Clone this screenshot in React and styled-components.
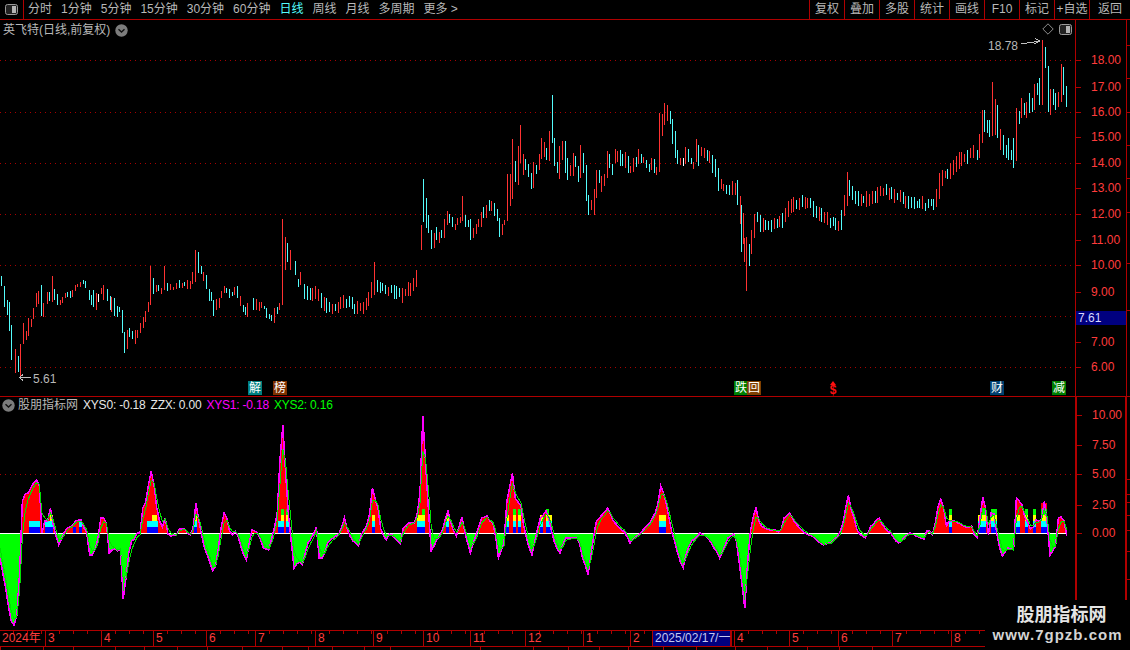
import React from "react"
import styled, { createGlobalStyle } from "styled-components"

const RED_LINE = "#b00000"
const TEXT_RED = "#ff3c3c"
const GRAY = "#b8b8b8"
const STEP = 2.8

const GlobalStyle = createGlobalStyle`
  html, body {
    margin: 0;
    padding: 0;
    background: #000;
  }
  body {
    font-family: "Liberation Sans", "Noto Sans CJK SC", sans-serif;
    font-size: 12px;
  }
`

const Page = styled.div`
  position: relative;
  display: flex;
  flex-direction: column;
  width: 1130px;
  height: 650px;
  overflow: hidden;
  background: #000;
  color: ${GRAY};
`

const Toolbar = styled.header`
  display: flex;
  align-items: stretch;
  height: 20px;
  box-sizing: border-box;
  border-bottom: 1px solid ${RED_LINE};
  line-height: 19px;
`

const ToggleCell = styled.div`
  display: flex;
  align-items: center;
  justify-content: center;
  width: 24px;
  box-sizing: border-box;
  border-right: 1px solid ${RED_LINE};
`

const Tabs = styled.nav`
  display: flex;
  flex: 1;
  gap: 9px;
  padding-left: 4px;
`

const Tab = styled.span`
  color: ${p => (p.$active ? "#54fcfc" : GRAY)};
  white-space: nowrap;
`

const ActionGroup = styled.nav`
  display: grid;
  grid-template-columns: repeat(8, 35px) 41px;
`

const Action = styled.span`
  border-left: 1px solid ${RED_LINE};
  text-align: center;
  white-space: nowrap;
`

const PricePane = styled.section`
  display: flex;
  height: 377px;
  box-sizing: border-box;
  border-bottom: 1px solid ${RED_LINE};
`

const IndicatorPane = styled.section`
  display: flex;
  height: 233px;
`

const Plot = styled.div`
  position: relative;
  width: 1075px;
  flex: none;
`

const ChartSvg = styled.svg`
  display: block;
  width: 100%;
  height: 100%;
  shape-rendering: crispEdges;
`

const DotLine = styled.line`
  stroke: #a80000;
  stroke-dasharray: 1 4;
  shape-rendering: auto;
`

const Axis = styled.div`
  position: relative;
  flex: 1;
  border-left: ${p => p.$width}px solid ${RED_LINE};
`

const AxisRail = styled.svg`
  position: absolute;
  inset: 0;
  width: 100%;
  height: 100%;
  shape-rendering: crispEdges;
`

const AxisLabel = styled.span.attrs(p => ({ style: { top: p.$y - 7 } }))`
  position: absolute;
  left: 15px;
  line-height: 14px;
  color: ${TEXT_RED};
`

const PriceTag = styled.span`
  position: absolute;
  left: 0;
  top: 291px;
  width: 50px;
  height: 14px;
  padding-left: 2px;
  box-sizing: border-box;
  background: #00007f;
  color: #d8d8ff;
  line-height: 14px;
`

const PaneTitle = styled.div`
  position: absolute;
  left: 3px;
  top: 3px;
  display: flex;
  align-items: center;
  gap: 5px;
  line-height: 14px;
  white-space: nowrap;
`

const IndicatorTitle = styled(PaneTitle)`
  left: 2px;
  top: 1px;
  gap: 3px;
`

const Legend = styled.span`
  margin-left: 2px;
  color: ${p => p.$color};
  letter-spacing: -0.2px;
  white-space: nowrap;
`

const CornerTools = styled.div`
  position: absolute;
  right: 3px;
  top: 3px;
  display: flex;
  align-items: center;
  gap: 5px;
`

const PriceNote = styled.span`
  position: absolute;
  color: ${GRAY};
  line-height: 14px;
  ${p => `left: ${p.$x}px; top: ${p.$y}px;`}
`

const Marker = styled.span.attrs(p => ({ style: { left: p.$x } }))`
  position: absolute;
  top: 361px;
  width: 14px;
  height: 14px;
  background: ${p => p.$bg};
  color: #fff;
  font-size: 12px;
  line-height: 14px;
  text-align: center;
`

const DollarMark = styled.span`
  position: absolute;
  left: 827px;
  top: 364px;
  width: 12px;
  color: #ff1010;
  font-size: 12px;
  font-weight: bold;
  line-height: 12px;
  text-align: center;
  &::before {
    content: "";
    position: absolute;
    left: 3px;
    top: -3px;
    border: 3px solid transparent;
    border-top: 0;
    border-bottom: 4px solid #ff1010;
  }
`

const DateRow = styled.footer`
  display: flex;
  height: 17px;
  box-sizing: border-box;
  border-top: 1px solid ${RED_LINE};
  border-bottom: 1px solid ${RED_LINE};
`

const DateCell = styled.span.attrs(p => ({ style: { width: p.$w } }))`
  flex: none;
  box-sizing: border-box;
  padding-left: 2px;
  border-left: ${p => (p.$first ? 0 : 1)}px solid ${RED_LINE};
  background: linear-gradient(to right, ${RED_LINE} 1px, transparent 1px) 13px 0 / 14px 3px repeat-x;
  color: ${TEXT_RED};
  line-height: 15px;
  white-space: nowrap;
`

const DateCursor = styled.span`
  flex: none;
  width: 79px;
  box-sizing: border-box;
  padding-left: 2px;
  border: 1px solid ${RED_LINE};
  border-width: 0 1px;
  background: #00007f;
  color: #c4c8f0;
  line-height: 15px;
  white-space: nowrap;
`

const StatusRow = styled.div`
  display: flex;
  flex: 1;
`

const StatusCell = styled.span.attrs(p => ({ style: { width: p.$w } }))`
  flex: none;
  box-sizing: border-box;
  border-left: 1px solid ${RED_LINE};
`

const Watermark = styled.aside`
  position: absolute;
  right: 0;
  bottom: 0;
  display: flex;
  flex-direction: column;
  align-items: center;
  width: 145px;
  height: 50px;
  padding: 4px 0 0 4px;
  box-sizing: border-box;
  background: #000;
  color: #e4e4e4;
  font-weight: bold;
`

const WatermarkName = styled.span`
  margin-left: 4px;
  font-size: 18px;
  line-height: 22px;
`

const WatermarkUrl = styled.span`
  margin-left: -4px;
  color: #d4d4d4;
  font-size: 15px;
  line-height: 18px;
  letter-spacing: 1px;
`

const PanelToggle = () => (
  <svg width="13" height="11" viewBox="0 0 13 11">
    <rect x="0.5" y="0.5" width="12" height="10" rx="2" fill="#222" stroke="#9a9a9a" />
    <rect x="7" y="2" width="4" height="7" fill="#b4b4b4" />
  </svg>
)

const DownBadge = () => (
  <svg width="13" height="13" viewBox="0 0 13 13">
    <circle cx="6.5" cy="6.5" r="6.2" fill="#7c7c7c" />
    <path d="M3.5 5.2 L6.5 8 L9.5 5.2" fill="none" stroke="#111" strokeWidth="1.4" />
  </svg>
)

const Diamond = () => (
  <svg width="12" height="12" viewBox="0 0 12 12">
    <path d="M6 .8 L11.2 6 L6 11.2 L.8 6 Z" fill="none" stroke="#8c8c8c" />
  </svg>
)

// "x,top,bottom,colour" read off the chart, scaled by 3 from the crop it came from
const parseBars = (text, ox, oy, shift = () => 0) =>
  text
    .trim()
    .split(/\s+/)
    .map(t => {
      const [x, a, b, c] = t.split(",")
      const px = ox + x / 3
      return { x: Math.round(px + shift(px)), top: oy + a / 3, bottom: oy + b / 3, c }
    })

const leftBars = parseBars(
  `4,48,78,c 13,78,141,c 20,120,165,c 28,126,213,c 34,195,300,c 44,267,339,r 53,288,335,c 59,252,348,r 68,189,252,r
  77,213,240,r 83,174,228,r 92,177,201,r 98,144,178,r 107,98,141,r 115,93,132,r 122,75,168,c 130,129,171,r 140,95,132,r
  146,96,123,c 155,48,126,r 161,87,120,c 170,102,135,c 179,120,135,r 185,111,129,r 194,99,114,r 202,96,111,c 209,93,114,c
  217,90,111,r 224,75,93,r 232,72,81,r 240,66,81,r 248,60,72,c 256,63,84,c 266,90,120,c 272,105,135,c 280,90,141,c
  287,100,150,r 295,102,126,w 304,84,102,r 310,75,120,r 320,87,123,c 329,108,150,c 334,111,156,r 343,114,168,c 350,138,171,c
  358,141,156,c 367,150,219,c 373,216,279,c 382,210,267,r 388,204,231,c 397,213,237,c 406,210,252,r 412,210,234,r 421,189,219,r
  430,170,204,r 436,153,186,r 445,126,156,r 451,18,135,r 460,54,102,c 469,75,96,r 475,75,93,c 484,84,102,r 493,18,90,r
  502,69,93,c 511,72,90,r 520,81,90,r 529,69,87,r 538,60,84,c 547,69,84,r 553,66,78,c 562,60,87,r 571,63,87,r 577,36,72,r
  586,-30,66,r 595,-25,39,c 604,18,42,c 610,36,63,r 619,45,87,c 628,87,123,c 634,96,123,c 640,120,168,c 649,117,150,r
  658,114,144,r 664,93,114,r 673,78,99,r 679,84,99,c 688,87,114,c 697,96,108,c 703,81,105,r 712,78,114,c 721,108,138,r
  730,135,156,c 736,141,165,c 742,129,171,r 751,114,150,c 760,117,150,r 769,126,153,r 775,126,144,r 784,138,147,c 790,144,174,c
  799,162,177,c 805,165,183,c 814,144,189,r 823,141,162,c 829,129,150,r 838,-124,135,r 847,-70,30,r 853,-50,6,c 862,-30,30,r
  877,3,45,c 886,57,81,c 892,36,75,r`,
  0,
  260,
  px => (px >= 250 ? 3 : 0)
)

const middleBars = parseBars(
  `64,405,480,r 70,267,395,c 79,325,415,c 85,375,430,c 94,420,476,c 103,430,475,r 109,412,450,c 118,427,458,r 124,420,443,c
  133,388,443,r 142,363,405,r 148,372,400,c 157,381,411,c 166,402,420,r 172,385,405,r 181,380,400,r 187,318,392,r 196,375,410,c
  205,390,410,c 211,387,450,c 220,415,445,r 229,402,432,r 235,388,410,r 244,366,410,r 250,351,385,c 259,345,385,r 268,330,363,c
  274,333,363,r 283,339,378,c 292,357,393,c 298,384,440,c 307,402,435,r 313,390,405,r 322,252,393,r 331,252,348,r 337,148,327,r
  346,213,276,c 355,168,285,r 361,105,220,r 370,192,255,r 376,207,240,c 385,222,262,c 394,249,297,c 400,217,295,r 409,225,252,c
  418,192,240,r 424,144,207,r 433,155,200,r 439,174,210,c 448,123,213,r 457,15,160,c 463,144,228,c 472,216,249,c 478,168,267,r
  487,153,210,r 496,153,249,c 502,204,270,c 511,225,258,r 520,189,258,r 526,198,231,c 535,228,276,c 541,165,264,r 550,189,249,c
  559,225,333,c 565,315,375,c 574,330,360,r 583,297,375,r 589,240,324,r 598,240,279,c 604,258,306,r 613,252,288,r 622,183,264,r
  628,192,234,c 637,222,255,c 646,177,219,r 652,183,216,r 661,180,228,c 667,192,228,c 676,186,234,r 685,198,249,c 691,228,249,r
  700,204,246,r 709,201,231,c 715,177,222,r 724,192,219,c 730,201,219,r 739,210,234,c 748,222,246,c 754,204,240,r 763,207,249,c
  769,231,255,r 778,69,246,r 787,72,138,r 793,39,105,r 802,45,93,r 811,63,102,c 817,87,162,c 826,123,204,c 832,180,222,c
  841,204,225,r 850,204,228,w 856,171,222,r 865,177,216,c 874,204,222,c 880,216,237,r 889,147,216,r 895,165,228,c`,
  400,
  90
)

const rightBars = parseBars(
  `110,360,390,c 118,312,385,r 127,240,340,r 133,240,305,c 141,270,310,c 148,270,320,c 157,157,318,r 165,208,315,r 172,225,325,c
  181,298,360,r 190,315,375,c 198,345,385,c 205,325,390,c 212,360,390,c 220,325,415,c 229,235,392,r 236,243,282,c 244,205,265,r
  252,220,255,c 259,215,265,r 267,190,248,c 275,205,245,c 283,162,240,r 291,160,195,c 298,145,225,c 307,30,225,r 316,52,115,c
  323,108,245,c 330,178,255,r 338,178,225,c 346,190,240,c 354,185,232,r 362,102,215,r 370,112,195,c 379,168,230,c`,
  940,
  30
)

const spikes = [
  { x: 374, top: 262, bottom: 294, c: "r" },
  { x: 741, top: 205, bottom: 252, c: "c" },
  { x: 746, top: 245, bottom: 291, c: "r" },
  { x: 744, top: 238, bottom: 262, c: "r" },
  { x: 847, top: 172, bottom: 205, c: "r" },
]

// price path in page pixels, for the stretches filled in by the generator
const pricePath = [
  [298, 285], [305, 295], [315, 292], [322, 305], [335, 308], [345, 300], [355, 310], [365, 305], [372, 285], [378, 288],
  [390, 290], [400, 295], [410, 288], [418, 270], [422, 250],
  [698, 150], [705, 155], [712, 165], [718, 185], [725, 190], [735, 187], [741, 225], [746, 262], [750, 240], [755, 215],
  [760, 225], [770, 225], [780, 220], [788, 205], [800, 202], [810, 205], [818, 215], [828, 222], [838, 225], [843, 205],
  [847, 185], [852, 195], [862, 200], [872, 198], [882, 190], [892, 195], [902, 200], [912, 203], [925, 205], [935, 200],
  [940, 175], [950, 170], [960, 158], [970, 155], [978, 145],
]

const mulberry = seed => () => {
  seed = (seed + 0x6d2b79f5) | 0
  let t = Math.imul(seed ^ (seed >>> 15), 1 | seed)
  t = (t + Math.imul(t ^ (t >>> 7), 61 | t)) ^ t
  return ((t ^ (t >>> 14)) >>> 0) / 4294967296
}

const interp = (pts, x) => {
  if (x <= pts[0][0]) return pts[0][1]
  for (let i = 1; i < pts.length; i++) {
    if (x <= pts[i][0]) {
      const [x0, y0] = pts[i - 1]
      const [x1, y1] = pts[i]
      return y0 + ((y1 - y0) * (x - x0)) / (x1 - x0)
    }
  }
  return pts[pts.length - 1][1]
}

const generateBars = (from, to, seed) => {
  const rand = mulberry(seed)
  const out = []
  for (let x = from; x <= to; x += STEP) {
    const now = interp(pricePath, x)
    const prev = interp(pricePath, x - STEP)
    let c = now < prev ? "r" : "c"
    if (rand() < 0.3) c = c === "r" ? "c" : "r"
    out.push({
      x: Math.round(x),
      top: Math.min(now, prev) - 2 - rand() * 6,
      bottom: Math.max(now, prev) + 2 + rand() * 6,
      c,
    })
  }
  return out
}

const candles = [
  ...leftBars,
  ...generateBars(304, 418, 11),
  ...middleBars,
  ...generateBars(701, 975, 29),
  ...spikes,
  ...rightBars,
]

const barsPath = c =>
  candles
    .filter(b => b.c === c)
    .map(b => `M${b.x + 0.5} ${Math.round(b.top)}V${Math.round(b.bottom)}`)
    .join("")

const priceGrid = [60, 112, 163, 214, 265, 316, 367]
const priceLabels = [
  ["18.00", 60], ["17.00", 87], ["16.00", 112], ["15.00", 137], ["14.00", 163], ["13.00", 188], ["12.00", 214],
  ["11.00", 240], ["10.00", 265], ["9.00", 292], ["7.00", 342], ["6.00", 367],
]
const indicatorLabels = [
  ["10.00", 415], ["7.50", 445], ["5.00", 474], ["2.50", 505], ["0.00", 533],
]

const oscillator = [
  [0, -20], [1, -25], [3, -40], [6, -55], [10, -85], [13, -92], [15, -88], [17, -83], [19, -40], [20, -20], [21, 0],
  [22, 30], [24, 38], [28, 40], [31, 45], [35, 53], [38, 48], [40, 25], [42, 0], [44, -3], [45, 12], [47, 10], [51, 25],
  [53, 8], [55, 0], [58, -8], [60, -12], [62, -5], [64, 0], [67, 5], [72, 7], [75, 12], [80, 13], [84, 5], [87, 0],
  [90, -22], [93, -22], [96, -14], [99, 0], [101, 15], [104, 15], [106, 10], [108, 0], [110, -20], [113, -15], [118, -18],
  [122, -14], [124, -66], [127, -35], [130, -10], [135, -5], [137, 0], [140, 0], [143, 25], [147, 35], [150, 62], [153, 48],
  [156, 25], [160, 10], [163, 5], [165, 15], [167, 0], [170, -3], [175, -2], [178, 4], [184, 4], [187, 0], [190, -2],
  [193, 3], [195, 30], [197, 30], [199, 10], [201, 0], [205, -15], [210, -30], [213, -38], [215, -33], [218, -15], [220, 0],
  [224, 20], [227, 15], [230, 0], [232, -2], [235, 2], [238, -3],
  ...[
    [0, -10], [15, -27], [25, -10], [38, 3], [55, 0], [70, -15], [85, -17], [100, 0], [112, 20], [125, 108], [135, 60],
    [150, 0], [165, -35], [175, -28], [190, -32], [200, -10], [215, -5], [230, 6], [240, -25], [250, -25], [265, -8],
    [280, -5], [300, 0], [313, 15], [325, 0], [340, -8], [355, -13], [365, 0], [385, 10], [400, 45], [410, 25], [425, 0],
    [437, -7], [450, 0], [480, -11], [490, 5], [510, 10], [528, 10], [540, 40], [550, 117], [558, 60], [570, 0], [575, -18],
    [590, -7], [605, 0], [622, 22], [630, 10], [647, -3], [667, 16], [675, 0], [690, -20], [700, -10], [715, 5], [725, 15],
    [740, 17], [755, 10], [765, 0], [778, -25], [790, -10], [800, 30], [817, 60], [825, 35], [840, 28], [855, 0], [873, -22],
    [885, -7], [900, 15],
  ].map(([x, v]) => [240 + x / 3, v]),
  [547, 22], [552, 0], [556, -15], [560, -20], [565, -5], [570, -5], [578, -5], [583, -25], [588, -42], [592, -15], [596, 12],
  [603, 18], [608, 25], [613, 12], [620, 5], [625, 0], [630, -10], [640, 0], [650, 10], [655, 20], [659, 30], [662, 47],
  [667, 25], [672, 0], [678, -20], [682, -35], [690, -10], [700, 0], [708, -5], [715, -15], [720, -25], [728, -5], [735, 0],
  [740, -30], [744, -75], [747, -30], [750, 0], [755, 25], [760, 8], [768, 3], [775, 3], [780, 0], [785, 15], [790, 20],
  [795, 10], [805, 0], [815, -5], [822, -12], [830, -10], [838, -3], [842, 5], [848, 38], [853, 15], [858, 0], [865, -5],
  [872, 7], [878, 15], [885, 5], [890, 0], [897, -8],
  ...[
    [0, -10], [15, -3], [30, 0], [50, -3], [75, -6], [80, 2], [90, 2], [100, -2], [110, 20], [120, 34], [130, 25], [140, 5],
    [145, -3], [150, 12], [165, 12], [185, 8], [200, 6], [215, 7], [225, -2], [232, -5], [240, 15], [247, 36], [255, 25],
    [265, -2], [275, 20], [285, 18], [290, 0], [300, -15], [310, -23], [320, -15], [345, -18], [347, 0], [352, 35], [365, 28],
    [375, 15], [385, 10], [395, 0], [405, 13], [415, 12], [420, 2], [432, 32], [440, 10], [445, 0], [452, -22], [465, -13],
    [475, -5], [478, 15], [482, 16], [490, 12], [500, -3], [503, 0],
  ].map(([x, v]) => [900 + x / 3, v]),
]

const ZERO = 533
const LAST_X = 1067

// one sample per trading day, keeping any peak that falls inside the day
const samples = []
for (let i = 0; i * STEP < LAST_X; i++) {
  const x = i * STEP
  let v = interp(oscillator, x)
  oscillator.forEach(([ax, av]) => {
    if (ax >= x - STEP / 2 && ax < x + STEP / 2 && Math.abs(av) > Math.abs(v)) v = av
  })
  samples.push([x, Math.round(v)])
}

const columns = Array.from({ length: LAST_X }, (_, x) => ({ x, v: Math.round(interp(samples, x + 0.5)) }))

const areaPath = sign =>
  columns
    .filter(c => c.v * sign > 0)
    .map(c => `M${c.x} ${ZERO}V${ZERO - c.v}H${c.x + 1}V${ZERO}Z`)
    .join("")

const linePath = values => values.map(([x, v], i) => `${i ? "L" : "M"}${x.toFixed(1)} ${ZERO - v}`).join("")

const fastLine = linePath(samples)
let lagged = 0
const slowLine = linePath(
  samples.map(([x, v]) => {
    lagged += 0.6 * (v - lagged)
    return [x, Math.round(lagged)]
  })
)

const BLOCK_COLORS = ["#0000ff", "#00ffff", "#ffff00", "#00ff00"]
const blocks = [
  [29, 11, 2], [45, 8, 2], [42, 3, 1, 1], [50, 3, 3], [73, 3, 1], [79, 3, 2], [147, 11, 2], [152, 5, 3], [194, 3, 3],
  [278, 6, 2], [281, 3, 4], [286, 3, 4], [372, 3, 3], [417, 8, 3], [422, 3, 4], [446, 3, 3], [506, 3, 3], [513, 3, 4],
  [518, 3, 4], [540, 3, 3], [546, 3, 4], [549, 3, 3], [659, 7, 3], [949, 3, 4], [978, 8, 3], [982, 4, 4], [991, 6, 4],
  [1016, 4, 3], [1025, 3, 4], [1033, 3, 4], [1041, 6, 5],
]

const blockRects = blocks.flatMap(([x, w, levels, skip = 0]) =>
  Array.from({ length: levels - skip }, (_, n) => {
    const level = n + skip
    return {
      key: `${x}-${w}-${level}`,
      x,
      y: ZERO - (level + 1) * 6,
      w,
      fill: BLOCK_COLORS[level] || "#ff0000",
    }
  })
)

const dateCells = [
  ["2024年", 45, true], ["3", 56], ["4", 52], ["5", 53], ["6", 49], ["7", 60], ["8", 58], ["9", 50], ["10", 47], ["11", 55],
  ["12", 58], ["1", 47], ["2", 22],
]
const dateCellsAfter = [
  ["", 3], ["4", 55], ["5", 49], ["6", 54], ["7", 59], ["8", 181],
]
const statusCells = [
  43, 30, 42, 29, 33, 30, 35, 40, 26, 24, 32, 26, 90, 53, 35, 31, 29, 35, 33, 39, 32, 40, 32, 33, 200,
]

const PriceChart = () => (
  <ChartSvg viewBox="0 20 1075 376" preserveAspectRatio="none">
    {priceGrid.map(y => (
      <DotLine key={y} x1="0" x2="1075" y1={y + 0.5} y2={y + 0.5} />
    ))}
    <path d={barsPath("r")} stroke="#ff3232" fill="none" />
    <path d={barsPath("c")} stroke="#54fcfc" fill="none" />
    <path d={barsPath("w")} stroke="#ffffff" fill="none" />
    <path d="M1021 44 L1040 41 M1035 38.5 L1040 41 L1034 44" stroke="#c0c0c0" fill="none" />
    <path d="M19.5 377.5 H31 M19.5 377.5 L23 374.5 M19.5 377.5 L23 380.5" stroke="#c0c0c0" fill="none" />
  </ChartSvg>
)

const IndicatorChart = () => (
  <ChartSvg viewBox="0 397 1075 233" preserveAspectRatio="none">
    <DotLine x1="0" x2="1075" y1="474.5" y2="474.5" />
    <path d={areaPath(1)} fill="#ff0000" />
    <path d={areaPath(-1)} fill="#00ff00" />
    {blockRects.map(r => (
      <rect key={r.key} x={r.x} y={r.y} width={r.w} height={6} fill={r.fill} />
    ))}
    <line x1="0" x2={LAST_X} y1={ZERO + 0.5} y2={ZERO + 0.5} stroke="#ffffff" />
    <path d={fastLine} fill="none" stroke="#ff00ff" strokeWidth="1.5" />
    <path d={slowLine} fill="none" stroke="#00e000" />
  </ChartSvg>
)

const tabs = ["分时", "1分钟", "5分钟", "15分钟", "30分钟", "60分钟", "日线", "周线", "月线", "多周期", "更多 >"]
const actions = ["复权", "叠加", "多股", "统计", "画线", "F10", "标记", "+自选", "返回"]

const App = () => (
  <Page>
    <GlobalStyle />
    <Toolbar>
      <ToggleCell>
        <PanelToggle />
      </ToggleCell>
      <Tabs>
        {tabs.map(t => (
          <Tab key={t} $active={t === "日线"}>
            {t}
          </Tab>
        ))}
      </Tabs>
      <ActionGroup>
        {actions.map(a => (
          <Action key={a}>{a}</Action>
        ))}
      </ActionGroup>
    </Toolbar>

    <PricePane>
      <Plot>
        <PriceChart />
        <PaneTitle>
          <span>英飞特(日线,前复权)</span>
          <DownBadge />
        </PaneTitle>
        <CornerTools>
          <Diamond />
          <PanelToggle />
        </CornerTools>
        <PriceNote $x={988} $y={19}>18.78</PriceNote>
        <PriceNote $x={33} $y={352}>5.61</PriceNote>
        <Marker $x={248} $bg="#008080">解</Marker>
        <Marker $x={273} $bg="#803000">榜</Marker>
        <Marker $x={734} $bg="#008000">跌</Marker>
        <Marker $x={747} $bg="#804000">回</Marker>
        <DollarMark>$</DollarMark>
        <Marker $x={990} $bg="#004070">财</Marker>
        <Marker $x={1052} $bg="#008000">减</Marker>
      </Plot>
      <Axis $width={1}>
        <AxisRail>
          <path
            d={[60, 87, 112, 137, 163, 188, 214, 240, 265, 292, 342, 367].map(y => `M0 ${y - 20}H5`).join("")}
            stroke={RED_LINE}
          />
          <path d="M50.5 0V376" stroke={RED_LINE} />
          <path d="M51 25H55M51 58H55M51 92H55M51 125H55M51 158H55M51 192H55M51 243H55M51 290H55" stroke={RED_LINE} />
        </AxisRail>
        {priceLabels.map(([t, y]) => (
          <AxisLabel key={t} $y={y - 20}>{t}</AxisLabel>
        ))}
        <PriceTag>7.61</PriceTag>
      </Axis>
    </PricePane>

    <IndicatorPane>
      <Plot>
        <IndicatorChart />
        <IndicatorTitle>
          <DownBadge />
          <span>股朋指标网</span>
          <Legend $color="#e8e8e8">XYS0: -0.18</Legend>
          <Legend $color="#e8e8e8">ZZX: 0.00</Legend>
          <Legend $color="#ff00ff">XYS1: -0.18</Legend>
          <Legend $color="#00ff00">XYS2: 0.16</Legend>
        </IndicatorTitle>
      </Plot>
      <Axis $width={2}>
        <AxisRail>
          <path d={[415, 445, 474, 505, 533].map(y => `M0 ${y - 397}H5`).join("")} stroke={RED_LINE} />
          <path d="M48.5 0V233" stroke={RED_LINE} strokeWidth="2" />
          <path d="M49 82H53M49 97H53M49 105H53M49 118H53M49 133H53M49 154H53M49 182H53" stroke={RED_LINE} />
        </AxisRail>
        {indicatorLabels.map(([t, y]) => (
          <AxisLabel key={t} $y={y - 397}>{t}</AxisLabel>
        ))}
      </Axis>
    </IndicatorPane>

    <DateRow>
      {dateCells.map(([t, w, first]) => (
        <DateCell key={t} $w={w} $first={first}>{t}</DateCell>
      ))}
      <DateCursor>2025/02/17/一</DateCursor>
      {dateCellsAfter.map(([t, w]) => (
        <DateCell key={`after-${t}`} $w={w}>{t}</DateCell>
      ))}
    </DateRow>
    <StatusRow>
      {statusCells.map((w, i) => (
        <StatusCell key={i} $w={w} />
      ))}
    </StatusRow>

    <Watermark>
      <WatermarkName>股朋指标网</WatermarkName>
      <WatermarkUrl>www.7gpzb.com</WatermarkUrl>
    </Watermark>
  </Page>
)

export default App
